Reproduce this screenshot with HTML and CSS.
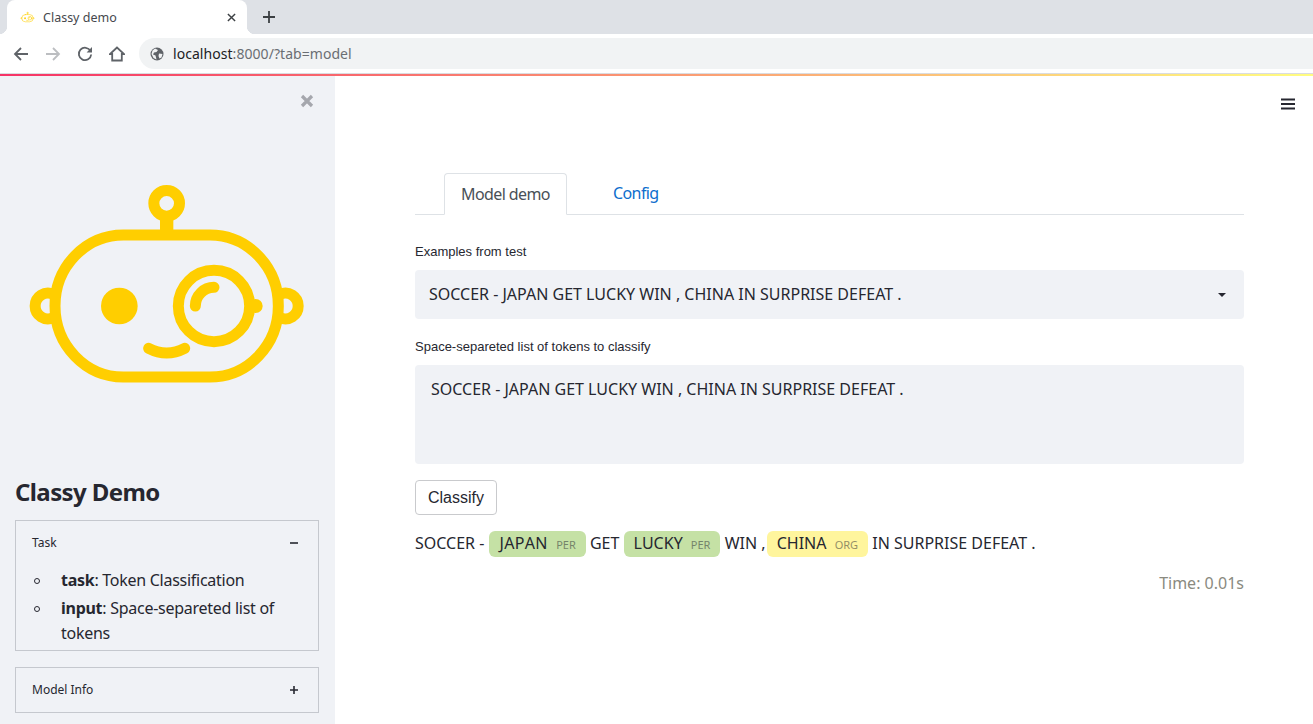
FILE: index.html
```html
<!DOCTYPE html>
<html lang="en">

<head>
    <meta charset="UTF-8">
    <title>Classy demo</title>
    <link rel="stylesheet" href="styles.css">
</head>

<body>
    <svg class="defs" width="0" height="0">
        <symbol id="robot" viewBox="0 0 885 645">
            <g fill="none" stroke="currentColor" stroke-width="33" stroke-linecap="round">
                <path d="M100 358A38.500 38.500 0 1 0 100 428" />
                <path d="M780 358A38.500 38.500 0 1 1 780 428" />
                <circle cx="440" cy="85" r="38.5" />
                <rect x="105" y="180" width="670" height="426" rx="205" ry="213" />
                <circle cx="582" cy="393" r="107" />
                <path d="M526 393A56 56 0 0 1 582 337" />
                <path d="M386 520Q440 548 494 520" />
            </g>
            <rect x="420" y="130" width="40" height="40" fill="currentColor" />
            <circle cx="298" cy="393" r="55" fill="currentColor" />
            <circle cx="707" cy="393" r="21" fill="currentColor" />
        </symbol>
    </svg>

    <!-- barra do navegador -->
    <div class="tabstrip">
        <div class="tab">
            <svg class="tab-icon"><use href="#robot" /></svg>
            <span class="tab-title">Classy demo</span>
            <svg class="tab-close" viewBox="0 0 10 10"><path d="M1 1L9 9M9 1L1 9" /></svg>
        </div>
        <svg class="tab-new" viewBox="0 0 12 12"><path d="M6 0V12M0 6H12" /></svg>
    </div>
    <div class="toolbar">
        <svg class="nav-icon" viewBox="0 0 16 16"><path d="M15 8H2M8 2L2 8L8 14" /></svg>
        <svg class="nav-icon nav-off" viewBox="0 0 16 16"><path d="M1 8H14M8 2L14 8L8 14" /></svg>
        <svg class="nav-icon" viewBox="0 0 16 16"><path d="M13.500 5A6.200 6.200 0 1 0 14.200 8.500" /><path class="solid" d="M15 1V6.400H9.600Z" /></svg>
        <svg class="nav-icon" viewBox="0 0 16 16"><path d="M8 1.500L1 8H3.200V14.500H12.800V8H15Z" /></svg>
        <div class="omnibox">
            <svg class="globe" viewBox="0 0 14 14">
                <circle cx="7" cy="7" r="6.5" />
                <path class="globe-land" d="M5 1.500L8 3L6.500 5L4 5.500L3 7.500L5.500 8.500L6.500 12.500L3.500 11L1.500 7L2.500 3.500ZM9 6.500L12.500 7L11.500 10.500L9.500 11.500L8.500 9Z" />
            </svg>
            <span class="url"><span class="url-host">localhost</span>:8000/?tab=model</span>
        </div>
    </div>
    <div class="decoration"></div>

    <div class="app">
        <aside class="sidebar">
            <div class="sidebar-top">
                <svg class="sidebar-close" viewBox="0 0 14 14"><path d="M2 2L12 12M12 2L2 12" /></svg>
            </div>
            <svg class="logo"><use href="#robot" /></svg>
            <h1 class="sidebar-title">Classy Demo</h1>

            <div class="expander">
                <div class="expander-head">
                    <span>Task</span>
                    <svg class="expander-icon" viewBox="0 0 10 10"><path d="M1 5H9" /></svg>
                </div>
                <ul class="expander-list">
                    <li><b>task</b>: Token Classification</li>
                    <li><b>input</b>: Space-separeted list of <span>tokens</span></li>
                </ul>
            </div>

            <div class="expander">
                <div class="expander-head">
                    <span>Model Info</span>
                    <svg class="expander-icon" viewBox="0 0 10 10"><path d="M1 5H9M5 1V9" /></svg>
                </div>
            </div>
        </aside>

        <main class="main">
            <svg class="menu-icon" viewBox="0 0 14 12"><path d="M0 1.500H14M0 6H14M0 10.500H14" /></svg>

            <div class="tabs">
                <div class="tabs-item tabs-active">Model demo</div>
                <div class="tabs-item tabs-link">Config</div>
            </div>

            <label class="field-label label-first">Examples from test</label>
            <div class="select">
                <span>SOCCER - JAPAN GET LUCKY WIN , CHINA IN SURPRISE DEFEAT .</span>
                <svg class="select-arrow" viewBox="0 0 8 4"><path d="M0 0H8L4 4Z" /></svg>
            </div>

            <label class="field-label label-second">Space-separeted list of tokens to classify</label>
            <div class="textarea">SOCCER - JAPAN GET LUCKY WIN , CHINA IN SURPRISE DEFEAT .</div>

            <button class="classify" type="button">Classify</button>

            <div class="result">
                SOCCER -
                <span class="entity entity-per entity-wide">JAPAN <small>PER</small></span>
                GET
                <span class="entity entity-per">LUCKY <small>PER</small></span>
                WIN ,
                <span class="entity entity-org">CHINA <small>ORG</small></span>
                IN SURPRISE DEFEAT .
            </div>
            <div class="time">Time: 0.01s</div>
        </main>
    </div>
</body>

</html>
```

FILE: styles.css
```css
html,
body {
    margin: 0;
    padding: 0;
    height: 724px;
    overflow: hidden;
}

body {
    font-family: "Noto Sans", sans-serif;
    color: #262730;
    background-color: #fff;
    display: flex;
    flex-direction: column;
}

.defs {
    position: absolute;
}

/* barra do navegador */
.tabstrip {
    height: 34px;
    flex: none;
    background-color: #dee1e6;
    display: flex;
    align-items: center;
    padding-left: 7px;
    box-sizing: border-box;
}

.tab {
    position: relative;
    width: 240px;
    height: 34px;
    background-color: #fff;
    border-radius: 8px 8px 0 0;
    display: flex;
    align-items: center;
    padding: 0 11px 0 13px;
    box-sizing: border-box;
}

.tab::before,
.tab::after {
    content: "";
    position: absolute;
    bottom: 0;
    width: 8px;
    height: 8px;
}

.tab::before {
    left: -8px;
    background-image: radial-gradient(circle at 0 0, #dee1e6 8px, #fff 8.500px);
}

.tab::after {
    right: -8px;
    background-image: radial-gradient(circle at 100% 0, #dee1e6 8px, #fff 8.500px);
}

.tab-icon {
    width: 15px;
    height: 12px;
    color: #ffce00;
    margin-right: 8px;
}

.tab-title {
    flex: 1;
    font-size: 12.5px;
    color: #45484d;
}

.tab-close {
    width: 9px;
    height: 9px;
    fill: none;
    stroke: #3c4043;
    stroke-width: 1.6;
}

.tab-new {
    width: 12px;
    height: 12px;
    margin-left: 16px;
    fill: none;
    stroke: #3c4043;
    stroke-width: 1.8;
}

.toolbar {
    height: 39px;
    flex: none;
    display: flex;
    align-items: center;
    background-color: #fff;
    padding-left: 13px;
    box-sizing: border-box;
}

.nav-icon {
    width: 16px;
    height: 16px;
    margin-right: 16px;
    fill: none;
    stroke: #5f6368;
    stroke-width: 1.8;
}

.nav-icon .solid {
    fill: #5f6368;
    stroke: none;
}

.nav-off {
    stroke: #bcbec1;
}

.omnibox {
    flex: 1;
    height: 31px;
    margin-left: -2px;
    margin-right: -20px;
    border-radius: 16px;
    background-color: #f1f3f4;
    display: flex;
    align-items: center;
    padding-left: 11px;
}

.globe {
    width: 14px;
    height: 14px;
    margin-right: 9px;
}

.globe circle {
    fill: #5f6368;
}

.globe-land {
    fill: #f1f3f4;
}

.url {
    font-size: 14px;
    letter-spacing: 0.05px;
    color: #6a6e73;
}

.url-host {
    color: #202124;
}

.decoration {
    height: 3px;
    flex: none;
    box-sizing: border-box;
    background-image: linear-gradient(90deg, #f63366, #fffd80);
    border-top: 1px solid #dadce0;
}

.app {
    flex: 1;
    display: flex;
    min-height: 0;
}

/* sidebar */
.sidebar {
    width: 335px;
    flex: none;
    background-color: #f0f2f6;
    padding: 0 16px 0 15px;
    box-sizing: border-box;
}

.sidebar-top {
    height: 99px;
    display: flex;
    justify-content: flex-end;
    align-items: flex-start;
}

.sidebar-close {
    width: 14px;
    height: 14px;
    margin-top: 18px;
    margin-right: 5px;
    fill: none;
    stroke: #a5a7ad;
    stroke-width: 3.2;
}

.logo {
    display: block;
    width: 295px;
    height: 215px;
    margin-left: 5px;
    color: #ffce00;
}

.sidebar-title {
    margin: 87px 0 13px;
    font-size: 24px;
    line-height: 30px;
    font-weight: 700;
    letter-spacing: -0.6px;
}

.expander {
    width: 304px;
    border: 1px solid #c5c8ce;
    box-sizing: border-box;
    margin-bottom: 16px;
    padding-bottom: 1px;
}

.expander-head {
    height: 43px;
    display: flex;
    align-items: center;
    justify-content: space-between;
    padding: 0 19px 0 16px;
    font-size: 12px;
}

.expander-icon {
    width: 10px;
    height: 10px;
    fill: none;
    stroke: #262730;
    stroke-width: 1.6;
}

.expander-list {
    list-style: none;
    margin: 0;
    padding: 4px 16px 3px 45px;
    font-size: 16px;
    line-height: 25px;
    letter-spacing: -0.27px;
}

.expander-list li {
    margin-bottom: 3px;
}

.expander-list li:last-child {
    margin-bottom: 0;
}

.expander-list li::before {
    content: "";
    display: inline-block;
    box-sizing: border-box;
    width: 6px;
    height: 6px;
    margin-left: -27px;
    margin-right: 21px;
    vertical-align: 2px;
    border: 1px solid #262730;
    border-radius: 50%;
}

/* conteudo */
.main {
    flex: 1;
    padding: 97px 69px 0 80px;
    position: relative;
    min-width: 0;
}

.menu-icon {
    position: absolute;
    top: 22px;
    right: 18px;
    width: 14px;
    height: 12px;
    fill: none;
    stroke: #262730;
    stroke-width: 2;
}

.tabs {
    display: flex;
    height: 42px;
    padding-left: 29px;
    border-bottom: 1px solid #dee2e6;
    box-sizing: border-box;
}

.tabs-item {
    font-size: 16px;
    line-height: 41px;
    padding: 0 16px;
    height: 42px;
    box-sizing: border-box;
    white-space: nowrap;
    letter-spacing: -0.6px;
}

.tabs-active {
    width: 123px;
    color: #495057;
    background-color: #fff;
    border: 1px solid #dee2e6;
    border-bottom-color: #fff;
    border-radius: 4px 4px 0 0;
}

.tabs-link {
    color: #0d6ecd;
    margin-left: 30px;
}

.field-label {
    display: block;
    font-family: "Liberation Sans", sans-serif;
    font-size: 13px;
    line-height: 16px;
}

.label-first {
    margin-top: 29px;
}

.label-second {
    margin-top: 20px;
}

.select {
    margin-top: 10px;
    height: 49px;
    background-color: #f0f2f6;
    border-radius: 4px;
    display: flex;
    align-items: center;
    justify-content: space-between;
    padding: 0 18px 2px 14px;
    box-sizing: border-box;
    font-size: 16px;
}

.textarea {
    margin-top: 10px;
    height: 99px;
    background-color: #f0f2f6;
    border-radius: 4px;
    padding: 13px 16px;
    box-sizing: border-box;
    font-size: 16px;
    line-height: 22px;
}

.select-arrow {
    width: 8px;
    height: 4px;
    margin-top: 2px;
    fill: #262730;
}

.classify {
    display: block;
    margin-top: 16px;
    width: 82px;
    height: 35px;
    padding: 0;
    background-color: #fff;
    border: 1px solid #c9cacd;
    border-radius: 4px;
    font-family: "Liberation Sans", sans-serif;
    font-size: 16px;
    color: #262730;
}

.result {
    margin-top: 16px;
    font-size: 16px;
    line-height: 25px;
}

.entity {
    display: inline-block;
    line-height: 24px;
    border-radius: 6px;
    padding: 0 10px;
    font-kerning: none;
}

.entity small {
    font-size: 11px;
    opacity: 0.5;
    margin-left: 4px;
    letter-spacing: 0;
}

.entity-wide {
    padding: 0 10px 0 11px;
    letter-spacing: 0.3px;
}

.entity-per {
    background-color: #c5e1a5;
}

.entity-org {
    background-color: #fff59d;
    margin-left: -3px;
}

.time {
    margin-top: 14px;
    text-align: right;
    font-size: 16px;
    line-height: 25px;
    color: #8a8a80;
}
```
